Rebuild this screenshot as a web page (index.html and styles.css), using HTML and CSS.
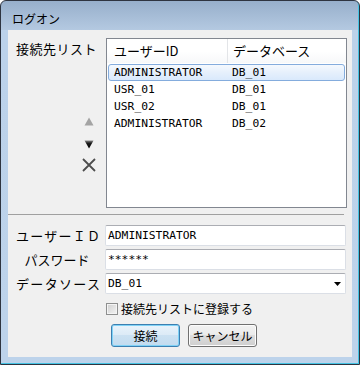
FILE: index.html
```html
<!DOCTYPE html>
<html lang="ja">
<head>
    <meta charset="UTF-8">
    <meta name="viewport" content="width=device-width, initial-scale=1.0">
    <title>ログオン</title>
    <link rel="stylesheet" href="styles.css">
</head>
<body>
    <div class="window">
        <div class="titlebar">ログオン</div>
        <div class="client">
            <div class="list-section">
                <div class="list-side">
                    <div class="list-label">接続先リスト</div>
                    <div class="list-tools">
                        <svg class="tool-up" width="10" height="9" viewBox="0 0 10 9"><path d="M5 0.5L9.5 8.5H0.5Z" fill="#a4a4a4"/></svg>
                        <svg class="tool-down" width="10" height="9" viewBox="0 0 10 9">
                            <defs><linearGradient id="dn" x1="0" y1="0" x2="0" y2="1"><stop offset="0" stop-color="#8a8a8a"/><stop offset="0.35" stop-color="#1a1a1a"/><stop offset="1" stop-color="#000"/></linearGradient></defs>
                            <path d="M0.5 0.5H9.5L5 8.5Z" fill="url(#dn)"/>
                        </svg>
                        <svg class="tool-remove" width="14" height="14" viewBox="0 0 14 14"><path d="M1 1L13 13M13 1L1 13" stroke="#4d4d4d" stroke-width="1.8"/></svg>
                    </div>
                </div>
                <div class="listview">
                    <div class="lv-header">
                        <div class="lv-head1">ユーザーID</div>
                        <div class="lv-head2">データベース</div>
                    </div>
                    <div class="lv-row selected"><span class="lv-col1">ADMINISTRATOR</span><span>DB_01</span></div>
                    <div class="lv-row"><span class="lv-col1">USR_01</span><span>DB_01</span></div>
                    <div class="lv-row"><span class="lv-col1">USR_02</span><span>DB_01</span></div>
                    <div class="lv-row"><span class="lv-col1">ADMINISTRATOR</span><span>DB_02</span></div>
                </div>
            </div>

            <div class="separator"></div>

            <div class="form">
                <div class="form-label spread">ユーザーＩＤ</div>
                <div class="field">ADMINISTRATOR</div>
                <div class="form-label centered">パスワード</div>
                <div class="field">******</div>
                <div class="form-label spread">データソース</div>
                <div class="field combo">
                    <span>DB_01</span>
                    <svg width="7" height="4" viewBox="0 0 7 4"><path d="M0 0H7L3.5 4Z" fill="#000"/></svg>
                </div>
            </div>

            <div class="check-row">
                <span class="checkbox"></span>
                <span class="check-label">接続先リストに登録する</span>
            </div>

            <div class="buttons">
                <button class="btn btn-default">接続</button>
                <button class="btn">キャンセル</button>
            </div>
        </div>
    </div>
</body>
</html>
```

FILE: styles.css
```css
* {
    box-sizing: border-box;
}
body {
    margin: 0;
    font-family: "Noto Sans CJK JP", sans-serif;
    font-size: 13px;
    color: #000;
}
.window {
    width: 360px;
    height: 365px;
    border: 1px solid #2e3440;
    border-radius: 6px 6px 0 0;
    background: linear-gradient(to bottom, #97afcb 0, #b4c9e1 29px, #bcd2ea 29px, #bdd3eb 100%);
    box-shadow: inset -1px -1px 0 #45c3e3;
    display: flex;
    flex-direction: column;
}
.titlebar {
    height: 29px;
    padding: 10px 0 0 11px;
    font-size: 12px;
    line-height: 16px;
    color: #000;
}
.client {
    flex: 1;
    margin: 0 7px 7px 7px;
    background: #f0f0f0;
    display: flex;
    flex-direction: column;
}

/* connection list */
.list-section {
    display: flex;
    padding-top: 8px;
}
.list-side {
    width: 98px;
    display: flex;
    flex-direction: column;
}
.list-label {
    margin-top: 2px;
    padding-left: 8px;
    line-height: 17px;
    letter-spacing: 0.5px;
}
.list-tools {
    margin: 60px 0 0 74px;
    width: 14px;
    display: flex;
    flex-direction: column;
    align-items: center;
}
.tool-down {
    margin-top: 14px;
}
.tool-remove {
    margin-top: 9px;
}
.listview {
    width: 241px;
    height: 170px;
    border: 1px solid #828790;
    background: #fff;
}
.lv-header {
    display: flex;
    height: 24px;
    line-height: 24px;
    background: linear-gradient(to bottom, #fff 0, #fff 50%, #f7f8f9 100%);
}
.lv-head1 {
    width: 121px;
    padding-left: 7px;
    border-right: 1px solid #e3e5e8;
}
.lv-head2 {
    padding-left: 5px;
}
.lv-row {
    display: flex;
    height: 17px;
    line-height: 15px;
    margin: 0 1px 0 1px;
    border: 1px solid transparent;
    border-radius: 3px;
    font-family: "DejaVu Sans Mono", monospace;
    font-size: 11.3px;
}
.lv-header + .lv-row {
    margin-top: 1px;
}
.lv-row.selected {
    border-color: #84acdd;
    background: linear-gradient(to bottom, #f5f9fe 0, #e6f0fc 50%, #d9e9fc 100%);
}
.lv-col1 {
    width: 123px;
    padding-left: 5px;
}

.separator {
    margin: 6px 8px 0 0;
    height: 1px;
    background: #a0a0a0;
}

/* login form */
.form {
    display: grid;
    grid-template-columns: 97px 241px;
    row-gap: 3px;
    margin-top: 10px;
}
.form-label {
    padding: 0 5px 0 8px;
    line-height: 21px;
}
.form-label.spread {
    text-align: justify;
    text-align-last: justify;
}
.form-label.centered {
    text-align: center;
    padding-right: 7px;
}
.field {
    height: 21px;
    border: 1px solid #dbdfe6;
    border-top-color: #abadb3;
    border-radius: 2px;
    background: #fff;
    padding-left: 2px;
    font-family: "DejaVu Sans Mono", monospace;
    font-size: 11.3px;
    line-height: 19px;
}
.combo {
    display: flex;
    justify-content: space-between;
    align-items: center;
    padding-right: 4px;
}

.check-row {
    display: flex;
    align-items: center;
    gap: 3px;
    margin-top: 9px;
    padding-left: 98px;
    height: 12px;
}
.checkbox {
    width: 12px;
    height: 12px;
    border: 1px solid #8e8f8f;
    background: linear-gradient(135deg, #cfcfcf 0, #f4f4f4 100%);
    box-shadow: inset 0 0 0 1px #f4f4f4;
}
.check-label {
    font-size: 12px;
    line-height: 14px;
}

.buttons {
    display: flex;
    gap: 8px;
    margin-top: 9px;
    padding-left: 103px;
}
.btn {
    width: 69px;
    height: 23px;
    padding: 0;
    font-family: "Noto Sans CJK JP", sans-serif;
    font-size: 12px;
    color: #000;
    border: 1px solid #707070;
    border-radius: 3px;
    background: linear-gradient(to bottom, #f2f2f2 0, #ebebeb 50%, #dddddd 50%, #cfcfcf 100%);
    box-shadow: inset 0 0 0 1px #fcfcfc;
}
.btn-default {
    border-color: #3c7fb1;
    background: linear-gradient(to bottom, #e9f3fb 0, #dbeaf6 50%, #cbe1f2 50%, #c2dbef 100%);
    box-shadow: inset 0 0 0 1px #7fd2f6;
}
```
